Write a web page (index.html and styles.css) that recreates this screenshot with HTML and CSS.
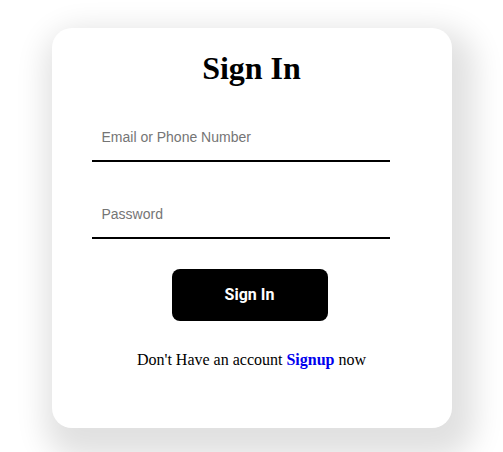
FILE: index.html
```html
<!DOCTYPE html>
<html>
<head>
<meta charset="utf-8">
<link rel="stylesheet" href="styles.css">
</head>
<body>
<div class="card">
  <h1 class="title">Sign In</h1>
  <form class="form">
    <input class="field" type="text" placeholder="Email or Phone Number">
    <input class="field field-pass" type="password" placeholder="Password">
    <button class="btn" type="button">Sign In</button>
  </form>
  <p class="footer">Don't Have an account <a class="link" href="#">Signup</a> now</p>
</div>
</body>
</html>
```

FILE: styles.css
```css
html {
  margin: 0;
  padding: 0;
  background: #ffffff;
}
body {
  margin: 0;
  padding: 28px 0 40px 0;
  font-family: "Liberation Serif", "Times New Roman", serif;
}
.card {
  width: 400px;
  height: 400px;
  box-sizing: border-box;
  margin: 0 auto;
  background: #fff;
  border-radius: 20px;
  box-shadow: 8px 16px 30px 15px rgba(0, 0, 0, 0.12);
  padding-top: 22px;
}
.title {
  margin: 0;
  text-align: center;
  font-size: 32px;
  font-weight: bold;
  line-height: 37px;
  color: #000;
}
.form {
  display: flex;
  flex-direction: column;
  align-items: flex-start;
  padding-left: 40px;
  margin-top: 30px;
}
.field {
  width: 298px;
  box-sizing: border-box;
  height: 45px;
  padding: 0 10px 4px 10px;
  border: none;
  border-bottom: 2px solid #000;
  outline: none;
  font-family: "Liberation Sans", Arial, sans-serif;
  font-size: 14px;
  color: #000;
  background: transparent;
}
.field::placeholder {
  color: #757575;
}
.field-pass {
  margin-top: 32px;
}
.btn {
  margin-top: 30px;
  margin-left: 80px;
  width: 156px;
  height: 52px;
  padding: 0 0 2px 0;
  border: none;
  border-radius: 8px;
  background: #000;
  color: #fff;
  font-family: Roboto, "Liberation Sans", sans-serif;
  font-weight: bold;
  font-size: 16px;
  cursor: pointer;
}
.footer {
  margin: 30px 0 0 0;
  text-align: center;
  font-size: 16px;
  color: #000;
}
.link {
  color: #0000ee;
  font-weight: bold;
  text-decoration: none;
}
```
